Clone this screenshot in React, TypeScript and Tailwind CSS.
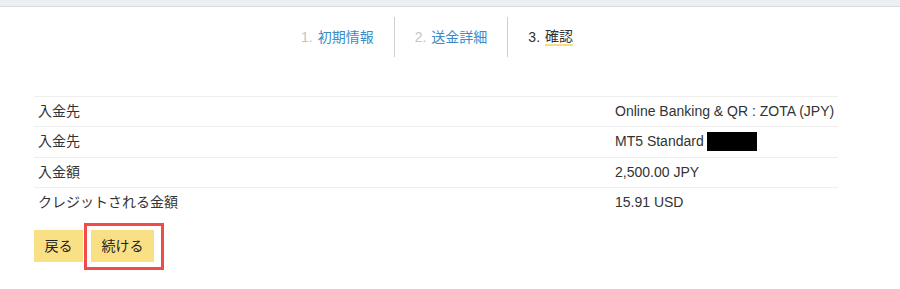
const font = { fontFamily: '"Liberation Sans", "Noto Sans CJK JP", sans-serif' };

const steps = [
  { num: '1.', label: '初期情報', active: false },
  { num: '2.', label: '送金詳細', active: false },
  { num: '3.', label: '確認', active: true },
];

const rows = [
  { label: '入金先', value: 'Online Banking & QR : ZOTA (JPY)' },
  { label: '入金先', value: 'MT5 Standard', masked: true },
  { label: '入金額', value: '2,500.00 JPY' },
  { label: 'クレジットされる金額', value: '15.91 USD' },
];

export default function App() {
  return (
    <div className="w-[900px] h-[289px] bg-white text-[14px] text-[#333]" style={font}>
      <div className="h-[7px] bg-[#eceff3] border-b border-[#d6dae1]" />

      <div className="px-[34px]">
        <div className="w-[804px]">
          <div className="flex justify-center pt-[10px] pl-[1px]">
            {steps.map((s, i) => (
              <div
                key={s.label}
                className={
                  i === 0
                    ? 'h-[40px] flex items-center pl-[21px] pr-5'
                    : 'h-[40px] flex items-center px-5 border-l border-[#cfcfcf]'
                }
              >
                <span className={s.active ? 'text-[#333] mr-[5px]' : 'text-[#c4c4c4] mr-[5px]'}>{s.num}</span>
                {s.active ? (
                  <span className="text-[#333] border-b-2 border-[#f9dc82] leading-[16px]">{s.label}</span>
                ) : (
                  <span className="text-[#3a8cc8]">{s.label}</span>
                )}
              </div>
            ))}
          </div>

          <div className="mt-[39px]">
            {rows.map((r, i) => (
              <div key={i} className="flex h-[30.3px] items-center border-t border-[#eeeeee]">
                <div className="w-[581px] pl-[4px]">{r.label}</div>
                <div className="flex items-center">
                  <span>{r.value}</span>
                  {r.masked && <span className="ml-[3px] inline-block w-[50px] h-[19px] bg-black" />}
                </div>
              </div>
            ))}
          </div>

          <div className="flex gap-[8px] mt-[13px]">
            <button className="w-[49px] h-[32px] flex items-center justify-center bg-[#fae085] text-[#222]">戻る</button>
            <button className="relative w-[63px] h-[32px] flex items-center justify-center bg-[#fae085] text-[#222]">
              続ける
              <span className="absolute -left-[7px] -right-[10px] -top-[7px] -bottom-[8px] border-[3px] border-[#f24b4b]" />
            </button>
          </div>
        </div>
      </div>
    </div>
  );
}
